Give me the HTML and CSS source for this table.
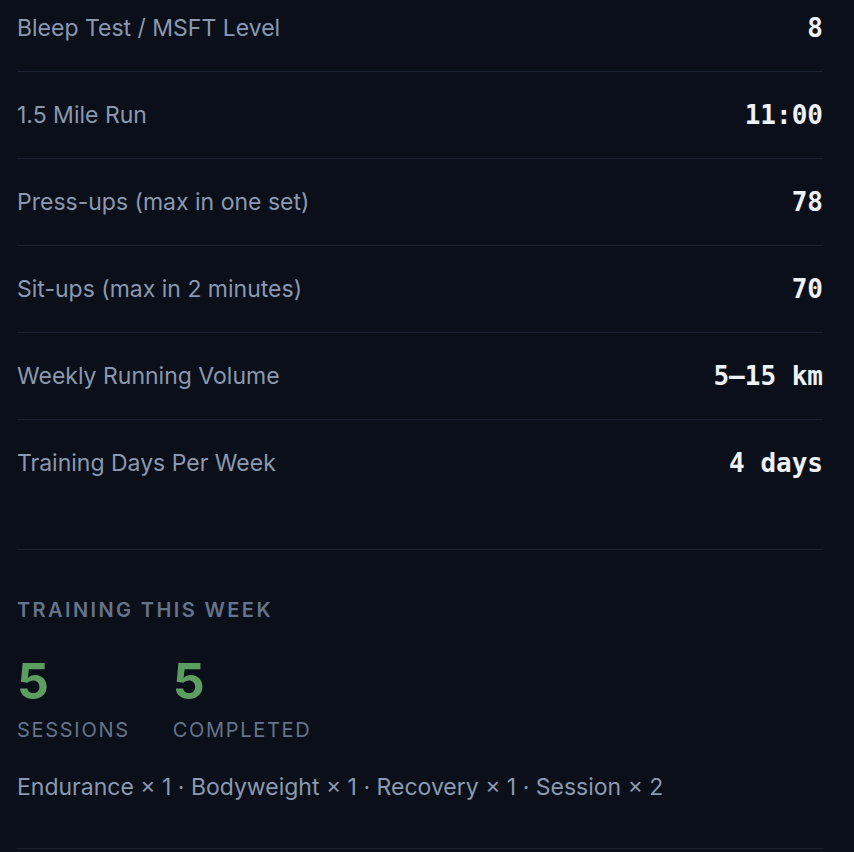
FILE: index.html
```html
<!DOCTYPE html>
<html lang="en">
<head>
    <meta charset="UTF-8">
    <meta name="viewport" content="width=device-width, initial-scale=1.0">
    <title>Fitness Baseline</title>
    <link rel="stylesheet" href="styles.css">
</head>
<body>
    <div class="page">
        <!-- Baseline metrics -->
        <div class="metrics">
            <div class="metric-row">
                <span class="metric-label">Bleep Test / MSFT Level</span>
                <span class="metric-value">8</span>
            </div>
            <div class="metric-row">
                <span class="metric-label">1.5 Mile Run</span>
                <span class="metric-value">11:00</span>
            </div>
            <div class="metric-row">
                <span class="metric-label">Press-ups (max in one set)</span>
                <span class="metric-value">78</span>
            </div>
            <div class="metric-row">
                <span class="metric-label">Sit-ups (max in 2 minutes)</span>
                <span class="metric-value">70</span>
            </div>
            <div class="metric-row">
                <span class="metric-label">Weekly Running Volume</span>
                <span class="metric-value">5–15 km</span>
            </div>
            <div class="metric-row">
                <span class="metric-label">Training Days Per Week</span>
                <span class="metric-value">4 days</span>
            </div>
        </div>

        <!-- Training this week -->
        <div class="week">
            <h2 class="section-title">Training This Week</h2>
            <div class="week-stats">
                <div class="stat">
                    <div class="stat-number">5</div>
                    <div class="stat-label">Sessions</div>
                </div>
                <div class="stat">
                    <div class="stat-number">5</div>
                    <div class="stat-label">Completed</div>
                </div>
            </div>
            <p class="week-breakdown">Endurance × 1 · Bodyweight × 1 · Recovery × 1 · Session × 2</p>
        </div>
    </div>
</body>
</html>
```

FILE: styles.css
```css
body {
    font-family: Inter, "Noto Sans", sans-serif;
    background-color: #0b0f19;
    color: #8a99b0;
    margin: 0;
    padding: 0;
}
.page {
    padding: 0 31px 0 17px;
}
.metrics {
    margin-top: -15px;
    padding-bottom: 43px;
}
.metric-row {
    display: flex;
    justify-content: space-between;
    align-items: center;
    height: 86px;
    border-bottom: 1px solid #1c2433;
}
.metric-row:last-child {
    border-bottom: none;
}
.metric-label {
    font-size: 23px;
    line-height: 28px;
    color: #8a99b0;
}
.metric-value {
    font-family: "DejaVu Sans Mono", "Liberation Mono", monospace;
    font-size: 26px;
    font-weight: bold;
    line-height: 28px;
    color: #eef1f6;
}
.week {
    border-top: 1px solid #1c2433;
    border-bottom: 1px solid #1c2433;
    padding: 48px 0 44px;
}
.section-title {
    margin: 0;
    font-size: 20px;
    line-height: 24px;
    font-weight: 600;
    letter-spacing: 0.12em;
    text-transform: uppercase;
    color: #65748a;
}
.week-stats {
    display: flex;
    gap: 43px;
    margin-top: 34px;
}
.stat-number {
    font-size: 50px;
    line-height: 1;
    font-weight: 700;
    color: #5b9e5f;
}
.stat-label {
    margin-top: 12px;
    font-size: 20px;
    line-height: 24px;
    letter-spacing: 0.085em;
    text-transform: uppercase;
    color: #65748a;
}
.week-breakdown {
    margin: 29px 0 0;
    font-size: 23px;
    line-height: 33px;
    color: #8a99b0;
}
```
